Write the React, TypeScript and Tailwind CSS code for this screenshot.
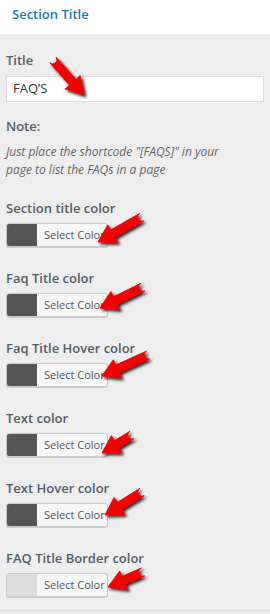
import React from "react";

type Pt = [number, number];

function arrowPath(tail: Pt, tip: Pt) {
  const dx = tip[0] - tail[0];
  const dy = tip[1] - tail[1];
  const len = Math.hypot(dx, dy);
  const ux = dx / len;
  const uy = dy / len;
  const nx = -uy;
  const ny = ux;
  const headLen = 17;
  const headHalf = 10;
  const sh = 4.2;
  const bx = tip[0] - ux * headLen;
  const by = tip[1] - uy * headLen;
  const p = (x: number, y: number) => `${x.toFixed(1)} ${y.toFixed(1)}`;
  return `M ${p(tail[0] + nx * sh, tail[1] + ny * sh)} L ${p(bx + nx * sh, by + ny * sh)} L ${p(
    bx + nx * headHalf,
    by + ny * headHalf
  )} L ${p(tip[0], tip[1])} L ${p(bx - nx * headHalf, by - ny * headHalf)} L ${p(
    bx - nx * sh,
    by - ny * sh
  )} L ${p(tail[0] - nx * sh, tail[1] - ny * sh)} A ${sh} ${sh} 0 0 1 ${p(
    tail[0] + nx * sh,
    tail[1] + ny * sh
  )} Z`;
}

const arrows: [Pt, Pt][] = [
  [[53, 60], [84, 95]],
  [[142, 217], [98, 242]],
  [[143, 287], [100, 308]],
  [[148, 355], [102, 376]],
  [[132, 435], [102, 453]],
  [[142, 492], [105, 515]],
  [[143, 572], [108, 587]],
];

function ColorButton({ swatch }: { swatch: string }) {
  return (
    <div className="flex h-[24px] w-[102px] overflow-hidden rounded-[3px] border border-[#c9c9c9] bg-[#f7f7f7] shadow-[0_1px_0_#ccc]">
      <div className="h-full w-[30px]" style={{ background: swatch }} />
      <div className="flex flex-1 items-center pl-[7px] text-[11px] text-[#555]">Select Color</div>
    </div>
  );
}

function Group({ label, swatch }: { label: string; swatch: string }) {
  return (
    <div className="mb-[22px]">
      <div className="h-[18px] text-[13px] font-semibold leading-[18px] text-[#555d66]">{label}</div>
      <div className="mt-[6px]">
        <ColorButton swatch={swatch} />
      </div>
    </div>
  );
}

export default function App() {
  return (
    <div
      className="relative h-[614px] w-[270px] overflow-hidden bg-[#eeeeee]"
      style={{ fontFamily: '"Open Sans", "Noto Sans", sans-serif' }}
    >
      <div className="h-[34px] bg-white pl-[12px] pt-[5px] text-[13px] font-semibold leading-[18px] text-[#1a79b5]">
        Section Title
      </div>
      <div className="px-[6px]">
        <div className="mt-[17px] h-[18px] text-[13px] font-semibold leading-[18px] text-[#555d66]">Title</div>
        <div className="mt-[7px] flex h-[26px] items-center border border-[#dddddd] bg-white pl-[6px] text-[13px] text-[#32373c]">
          FAQ’S
        </div>
        <div className="mt-[15px] h-[18px] text-[13px] font-semibold leading-[18px] text-[#555d66]">Note:</div>
        <div className="mt-[8px] text-[12px] italic leading-[18px] text-[#666]">
          Just place the shortcode "[FAQS]" in your
          <br />
          page to list the FAQs in a page
        </div>
        <div className="mt-[20px]">
          <Group label="Section title color" swatch="#555555" />
          <Group label="Faq Title color" swatch="#555555" />
          <Group label="Faq Title Hover color" swatch="#555555" />
          <Group label="Text color" swatch="#555555" />
          <Group label="Text Hover color" swatch="#555555" />
          <Group label="FAQ Title Border color" swatch="#dddddd" />
        </div>
      </div>
      <div className="absolute left-0 top-[610px] h-[1px] w-full bg-[#dcdcdc]" />
      <svg className="pointer-events-none absolute left-0 top-0" width={270} height={614}>
        <defs>
          <filter id="sh" x="-30%" y="-30%" width="160%" height="160%">
            <feDropShadow dx="2" dy="2" stdDeviation="1.6" floodColor="#000" floodOpacity="0.85" />
          </filter>
        </defs>
        {arrows.map(([t, h], i) => (
          <path key={i} d={arrowPath(t, h)} fill="#f50000" filter="url(#sh)" strokeLinejoin="round" stroke="#f50000" strokeWidth={1} />
        ))}
      </svg>
    </div>
  );
}
